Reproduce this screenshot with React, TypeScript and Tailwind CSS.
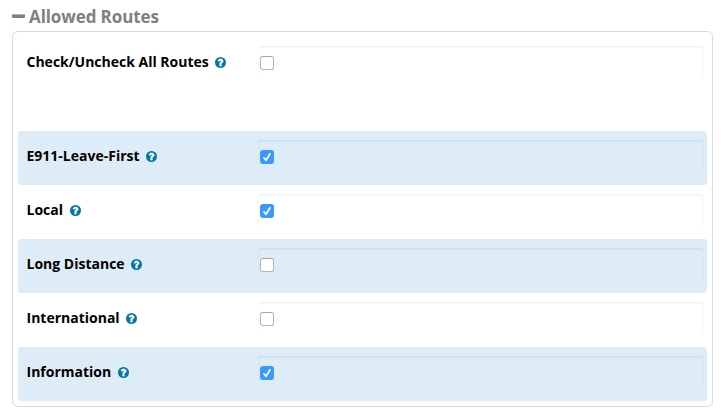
import { useState } from "react";
import clsx from "clsx";

const routes = [
    { label: "Check/Uncheck All Routes", checked: false },
    { label: "E911-Leave-First", checked: true },
    { label: "Local", checked: true },
    { label: "Long Distance", checked: false },
    { label: "International", checked: false },
    { label: "Information", checked: true },
];

function HelpIcon() {
    return (
        <svg viewBox="128 128 1536 1536" className="mt-px ml-[6.5px] size-[11px] shrink-0">
            <circle cx="896" cy="896" r="768" className="fill-[#0078a5]" />
            <path
                className="fill-white stroke-white stroke-[50]"
                d="M1024 1376v-192q0-14-9-23t-23-9h-192q-14 0-23 9t-9 23v192q0 14 9 23t23 9h192q14 0 23-9t9-23zm256-672q0-88-55.5-163t-138.5-116-170-41q-243 0-371 213-15 24 8 42l132 100q7 6 19 6 16 0 25-12 53-68 86-92 34-24 86-24 48 0 85.5 26t37.5 59q0 38-20 61t-68 45q-63 28-115.5 86.5t-52.5 125.5v36q0 14 9 23t23 9h192q14 0 23-9t9-23q0-19 21.5-49.5t54.5-49.5q32-18 49-28.5t46-35 44.5-48 28-60.5 12.5-81z"
            />
        </svg>
    );
}

function Checkbox({ label, checked, onChange }: { label: string; checked: boolean; onChange: () => void }) {
    return (
        <button
            type="button"
            role="checkbox"
            aria-checked={checked}
            aria-label={label}
            onClick={onChange}
            className={clsx(
                "size-[14px] rounded-[3px]",
                checked ? "bg-[#3b99fc]" : "border border-[#b4b4b4] border-t-[#a6a6a6] bg-white"
            )}
        >
            {checked && (
                <svg viewBox="0 0 14 14" className="size-[14px] fill-none stroke-white stroke-[1.7]">
                    <path d="M3.9 7.8 L6 10.3 L10 3.8" strokeLinecap="round" strokeLinejoin="round" />
                </svg>
            )}
        </button>
    );
}

export default function App() {
    const [items, setItems] = useState(routes);

    const toggle = (index: number) => {
        const next = !items[index].checked;
        setItems(items.map((item, i) => (index === 0 || i === index ? { ...item, checked: next } : item)));
    };

    return (
        <div className="h-[416px] w-[723px] bg-white pt-[5px] pl-3 font-['Open_Sans',sans-serif]">
            <div className="flex h-[26px] items-start text-[#808080]">
                <span className="mt-[9px] h-1 w-[13px] rounded-[1px] border-t border-[#b0b0b0] bg-[#808080]" />
                <h2 className="ml-1 text-[17px] leading-6 font-bold tracking-[-0.1px]">Allowed Routes</h2>
            </div>

            <div className="h-[376px] w-[701px] rounded-[6px] border border-[#d9d9d9] p-[5px]">
                {items.map((item, i) => (
                    <div
                        key={item.label}
                        className={clsx(
                            "flex h-[54px] rounded-[3px] pt-[9px] pr-[3px] pl-[8.5px]",
                            i === 0 && "mb-10",
                            i % 2 === 1 && "bg-[#deecf7]"
                        )}
                    >
                        <div className="flex h-8 w-[231.5px] shrink-0 items-center text-sm font-bold text-black">
                            <span>{item.label}</span>
                            <HelpIcon />
                        </div>
                        <div className="flex h-[34px] grow items-center rounded-[4px] pl-[2px] shadow-[inset_0_1px_2px_rgba(0,0,0,0.08)]">
                            <Checkbox label={item.label} checked={item.checked} onChange={() => toggle(i)} />
                        </div>
                    </div>
                ))}
            </div>
        </div>
    );
}
